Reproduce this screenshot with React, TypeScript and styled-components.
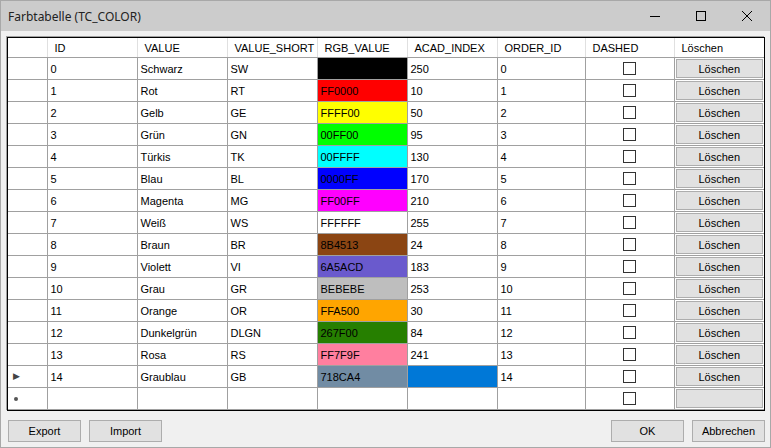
import React from "react";
import styled, { createGlobalStyle } from "styled-components";

const GlobalStyle = createGlobalStyle`
  html, body {
    margin: 0;
    padding: 0;
    background: #f0f0f0;
  }
  body {
    font-family: "Liberation Sans", Arial, sans-serif;
    font-size: 11px;
    color: #000;
  }
`;

const Window = styled.div`
  width: 771px;
  height: 448px;
  box-sizing: border-box;
  border: 1px solid #a8a8a8;
  background: #f0f0f0;
  display: flex;
  flex-direction: column;
  overflow: hidden;
`;

const TitleBar = styled.div`
  height: 30px;
  flex: none;
  background: #cccccc;
  display: flex;
  align-items: center;
  padding-left: 7px;
`;

const Title = styled.div`
  flex: 1;
  font-family: "Noto Sans", "Open Sans", sans-serif;
  font-size: 12px;
  color: #222;
`;

const Controls = styled.div`
  display: flex;
  height: 100%;
`;

const ControlButton = styled.div`
  width: 46px;
  height: 100%;
  display: flex;
  align-items: center;
  justify-content: center;
`;

const Body = styled.div`
  flex: 1;
  display: flex;
  flex-direction: column;
  padding: 6px 5px 0 6px;
`;

const GridFrame = styled.div`
  width: 756px;
  border: 1px solid #000;
  box-shadow: -1px -1px 0 #a0a0a0;
  background: #fff;
`;

const Table = styled.table`
  border-collapse: collapse;
  table-layout: fixed;
  width: 756px;
`;

const HeadCell = styled.th`
  height: 19px;
  padding: 0 0 0 7px;
  font-weight: normal;
  text-align: left;
  border-right: 1px solid #e0e0e0;
  border-bottom: 1px solid #a0a0a0;
  white-space: nowrap;
  overflow: hidden;
  &:last-child { border-right: none; }
`;

const RowHead = styled.td`
  height: 21px;
  padding: 0;
  border-right: 1px solid #a0a0a0;
  border-bottom: 1px solid #a0a0a0;
  position: relative;
  font-size: 9px;
  color: #444;
`;

const Marker = styled.span`
  position: absolute;
  left: 5px;
  top: 5px;
`;

const NewRowDot = styled.span`
  position: absolute;
  left: 6px;
  top: 9px;
  width: 4px;
  height: 4px;
  border-radius: 50%;
  background: #555;
`;

const Cell = styled.td<{ $bg?: string }>`
  height: 21px;
  padding: 0 0 0 3px;
  border-right: 1px solid #a0a0a0;
  border-bottom: 1px solid #a0a0a0;
  background: ${(p) => p.$bg || "#fff"};
  white-space: nowrap;
  overflow: hidden;
  &:last-child { border-right: none; }
`;

const CenterCell = styled(Cell)`
  padding: 0;
  text-align: center;
`;

const Check = styled.span`
  display: inline-block;
  width: 11px;
  height: 11px;
  border: 1px solid #333;
  background: #fff;
  vertical-align: middle;
`;

const CellButton = styled.div`
  margin: 0 1px;
  height: 19px;
  box-sizing: border-box;
  border: 1px solid #adadad;
  background: #e1e1e1;
  display: flex;
  align-items: center;
  justify-content: center;
`;

const Footer = styled.div`
  display: flex;
  align-items: center;
  gap: 8px;
  margin-top: 9px;
  padding-left: 1px;
`;

const Spacer = styled.div`
  flex: 1;
`;

const Button = styled.button`
  width: 73px;
  height: 22px;
  border: 1px solid #adadad;
  background: #e1e1e1;
  font-family: "Liberation Sans", Arial, sans-serif;
  font-size: 11px;
  color: #000;
  padding: 0;
`;

type Row = { id: number; value: string; short: string; rgb: string; acad: number };

const rows: Row[] = [
  { id: 0, value: "Schwarz", short: "SW", rgb: "000000", acad: 250 },
  { id: 1, value: "Rot", short: "RT", rgb: "FF0000", acad: 10 },
  { id: 2, value: "Gelb", short: "GE", rgb: "FFFF00", acad: 50 },
  { id: 3, value: "Grün", short: "GN", rgb: "00FF00", acad: 95 },
  { id: 4, value: "Türkis", short: "TK", rgb: "00FFFF", acad: 130 },
  { id: 5, value: "Blau", short: "BL", rgb: "0000FF", acad: 170 },
  { id: 6, value: "Magenta", short: "MG", rgb: "FF00FF", acad: 210 },
  { id: 7, value: "Weiß", short: "WS", rgb: "FFFFFF", acad: 255 },
  { id: 8, value: "Braun", short: "BR", rgb: "8B4513", acad: 24 },
  { id: 9, value: "Violett", short: "VI", rgb: "6A5ACD", acad: 183 },
  { id: 10, value: "Grau", short: "GR", rgb: "BEBEBE", acad: 253 },
  { id: 11, value: "Orange", short: "OR", rgb: "FFA500", acad: 30 },
  { id: 12, value: "Dunkelgrün", short: "DLGN", rgb: "267F00", acad: 84 },
  { id: 13, value: "Rosa", short: "RS", rgb: "FF7F9F", acad: 241 },
  { id: 14, value: "Graublau", short: "GB", rgb: "718CA4", acad: 0 },
];

const widths = [39, 90, 90, 90, 90, 90, 88, 89, 90];
const headers = ["", "ID", "VALUE", "VALUE_SHORT", "RGB_VALUE", "ACAD_INDEX", "ORDER_ID", "DASHED", "Löschen"];

const App: React.FC = () => {
  return (
    <>
      <GlobalStyle />
      <Window>
        <TitleBar>
          <Title>Farbtabelle (TC_COLOR)</Title>
          <Controls>
            <ControlButton>
              <svg width="10" height="10" viewBox="0 0 10 10">
                <path d="M0 5.5h10" stroke="#000" strokeWidth="1" />
              </svg>
            </ControlButton>
            <ControlButton>
              <svg width="10" height="10" viewBox="0 0 10 10">
                <rect x="0.5" y="0.5" width="9" height="9" fill="none" stroke="#000" strokeWidth="1" />
              </svg>
            </ControlButton>
            <ControlButton>
              <svg width="10" height="10" viewBox="0 0 10 10">
                <path d="M0 0L10 10M10 0L0 10" stroke="#000" strokeWidth="1" />
              </svg>
            </ControlButton>
          </Controls>
        </TitleBar>
        <Body>
          <GridFrame>
            <Table>
              <colgroup>
                {widths.map((w, i) => (
                  <col key={i} style={{ width: w }} />
                ))}
              </colgroup>
              <thead>
                <tr>
                  {headers.map((h, i) => (
                    <HeadCell key={i}>{h}</HeadCell>
                  ))}
                </tr>
              </thead>
              <tbody>
                {rows.map((r) => {
                  const current = r.id === 14;
                  return (
                    <tr key={r.id}>
                      <RowHead>
                        {current && <Marker>▶</Marker>}
                      </RowHead>
                      <Cell>{r.id}</Cell>
                      <Cell>{r.value}</Cell>
                      <Cell>{r.short}</Cell>
                      <Cell $bg={"#" + r.rgb}>{r.rgb}</Cell>
                      <Cell $bg={current ? "#0078d7" : undefined}>{current ? "" : r.acad}</Cell>
                      <Cell>{r.id}</Cell>
                      <CenterCell>
                        <Check />
                      </CenterCell>
                      <CenterCell>
                        <CellButton>Löschen</CellButton>
                      </CenterCell>
                    </tr>
                  );
                })}
                <tr>
                  <RowHead>
                    <NewRowDot />
                  </RowHead>
                  <Cell />
                  <Cell />
                  <Cell />
                  <Cell />
                  <Cell />
                  <Cell />
                  <CenterCell>
                    <Check />
                  </CenterCell>
                  <CenterCell>
                    <CellButton />
                  </CenterCell>
                </tr>
              </tbody>
            </Table>
          </GridFrame>
          <Footer>
            <Button>Export</Button>
            <Button>Import</Button>
            <Spacer />
            <Button>OK</Button>
            <Button>Abbrechen</Button>
          </Footer>
        </Body>
      </Window>
    </>
  );
};

export default App;
